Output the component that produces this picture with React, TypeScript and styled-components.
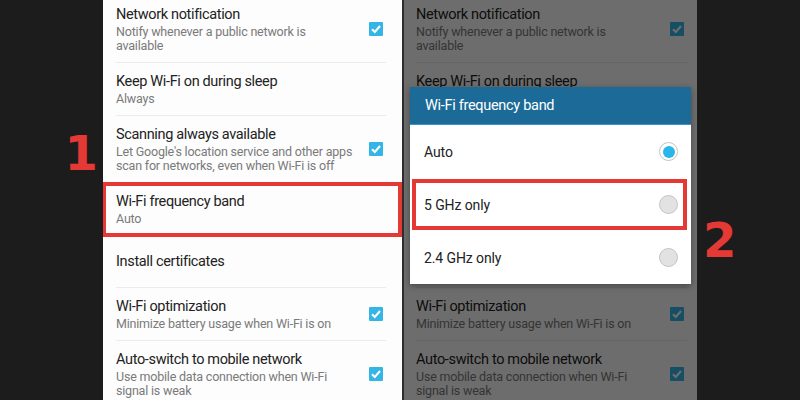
import styled, { createGlobalStyle } from "styled-components";

const GlobalStyle = createGlobalStyle`
  html, body {
    margin: 0;
    padding: 0;
    background: #1c1c1d;
  }
  body {
    font-family: Roboto, "Noto Sans", Arial, sans-serif;
  }
`;

const Page = styled.div`
  display: flex;
  width: 800px;
  height: 400px;
  overflow: hidden;
  background: #1c1c1d;
`;

const Gutter = styled.div<{ $side: "left" | "right"; $top: number }>`
  width: 103px;
  flex-shrink: 0;
  display: flex;
  align-items: flex-start;
  justify-content: ${(p) => (p.$side === "left" ? "flex-end" : "flex-start")};
  padding-top: ${(p) => p.$top}px;
  padding-right: ${(p) => (p.$side === "left" ? "5px" : "0")};
  padding-left: ${(p) => (p.$side === "right" ? "6px" : "0")};
  box-sizing: border-box;
`;

const StepNumber = styled.div`
  font-family: "DejaVu Sans", Verdana, sans-serif;
  font-weight: 700;
  font-size: 48px;
  line-height: 1;
  color: #e53935;
`;

const Screen = styled.div<{ $width: number }>`
  position: relative;
  width: ${(p) => p.$width}px;
  flex-shrink: 0;
  height: 400px;
  overflow: hidden;
  background: #fdfdfd;
`;

const Separator = styled.div`
  width: 2px;
  flex-shrink: 0;
  background: #2e2e2e;
`;

const List = styled.div`
  margin-top: -4px;
`;

const Row = styled.div<{ $highlight?: boolean }>`
  position: relative;

  ${(p) =>
    p.$highlight &&
    `
    &::after {
      content: "";
      position: absolute;
      top: -1px;
      bottom: -1px;
      left: -1px;
      right: 0;
      border: 4px solid #e53935;
      z-index: 2;
    }
  `}
`;

const RowInner = styled.div<{ $left: number; $right: number; $plain?: boolean }>`
  display: flex;
  align-items: center;
  margin-left: ${(p) => p.$left}px;
  margin-right: ${(p) => p.$right}px;
  padding: ${(p) => (p.$plain ? "16px 0 15px" : "9px 0 9px")};
  border-bottom: 1px solid #ebebeb;
`;

const RowText = styled.div`
  flex: 1;
  min-width: 0;
`;

const Title = styled.div`
  font-size: 14.5px;
  letter-spacing: -0.35px;
  line-height: 20px;
  color: #222222;
  white-space: nowrap;
`;

const Summary = styled.div`
  font-size: 12.5px;
  letter-spacing: -0.2px;
  line-height: 14px;
  color: #7a7a7a;
  white-space: nowrap;
`;

const CheckBox = styled.div`
  width: 14px;
  height: 14px;
  margin-right: 3px;
  border-radius: 1px;
  background: #33b5e5;
  display: flex;
  align-items: center;
  justify-content: center;
  flex-shrink: 0;
`;

const Dim = styled.div`
  position: absolute;
  inset: 0;
  background: rgba(0, 0, 0, 0.57);
  z-index: 3;
`;

const Dialog = styled.div`
  position: absolute;
  top: 87px;
  left: 6px;
  right: 6px;
  z-index: 4;
  background: #ffffff;
  box-shadow: 0 2px 6px rgba(0, 0, 0, 0.35);
`;

const DialogHeader = styled.div`
  height: 38px;
  box-sizing: border-box;
  display: flex;
  align-items: center;
  padding-left: 15px;
  background: #1b6a97;
  border-bottom: 1px solid #3f92c6;
  color: #ffffff;
  font-size: 14.5px;
  letter-spacing: -0.3px;
`;

const Option = styled.div<{ $highlight?: boolean }>`
  position: relative;
  height: 53px;
  display: flex;
  align-items: center;
  justify-content: space-between;
  padding: 0 13px 0 14px;
  font-size: 14px;
  letter-spacing: -0.1px;
  color: #222222;

  ${(p) =>
    p.$highlight &&
    `
    &::after {
      content: "";
      position: absolute;
      top: 1px;
      bottom: 1px;
      left: 2px;
      right: 4px;
      border: 4px solid #e53935;
    }
  `}
`;

const Radio = styled.div<{ $checked?: boolean }>`
  width: 19px;
  height: 19px;
  box-sizing: border-box;
  border-radius: 50%;
  border: 1.5px solid #c4c4c4;
  background: ${(p) => (p.$checked ? "#ffffff" : "#e2e2e2")};
  display: flex;
  align-items: center;
  justify-content: center;

  &::before {
    content: "";
    display: ${(p) => (p.$checked ? "block" : "none")};
    width: 12px;
    height: 12px;
    border-radius: 50%;
    background: #29b6e8;
  }
`;

type Setting = {
  title: string;
  summary?: string[];
  checked?: boolean;
  highlight?: boolean;
};

const settings: Setting[] = [
  {
    title: "Network notification",
    summary: ["Notify whenever a public network is", "available"],
    checked: true,
  },
  { title: "Keep Wi-Fi on during sleep", summary: ["Always"] },
  {
    title: "Scanning always available",
    summary: ["Let Google's location service and other apps", "scan for networks, even when Wi-Fi is off"],
    checked: true,
  },
  { title: "Wi-Fi frequency band", summary: ["Auto"], highlight: true },
  { title: "Install certificates" },
  {
    title: "Wi-Fi optimization",
    summary: ["Minimize battery usage when Wi-Fi is on"],
    checked: true,
  },
  {
    title: "Auto-switch to mobile network",
    summary: ["Use mobile data connection when Wi-Fi", "signal is weak"],
    checked: true,
  },
];

const bands = [
  { label: "Auto", checked: true },
  { label: "5 GHz only", highlight: true },
  { label: "2.4 GHz only" },
];

function Check() {
  return (
    <svg width="12" height="12" viewBox="0 0 12 12">
      <polyline points="2,6.2 4.8,9 10,3" fill="none" stroke="#ffffff" strokeWidth="2" />
    </svg>
  );
}

function SettingsList({ left, right, markRow }: { left: number; right: number; markRow: boolean }) {
  return (
    <List>
      {settings.map((s) => (
        <Row key={s.title} $highlight={markRow && s.highlight}>
          <RowInner $left={left} $right={right} $plain={!s.summary}>
            <RowText>
              <Title>{s.title}</Title>
              {s.summary?.map((line) => (
                <Summary key={line}>{line}</Summary>
              ))}
            </RowText>
            {s.checked && (
              <CheckBox>
                <Check />
              </CheckBox>
            )}
          </RowInner>
        </Row>
      ))}
    </List>
  );
}

export default function App() {
  return (
    <>
      <GlobalStyle />
      <Page>
        <Gutter $side="left" $top={129}>
          <StepNumber>1</StepNumber>
        </Gutter>

        <Screen $width={299}>
          <SettingsList left={13} right={16} markRow />
        </Screen>

        <Separator />

        <Screen $width={293}>
          <SettingsList left={12} right={10} markRow={false} />
          <Dim />
          <Dialog>
            <DialogHeader>Wi-Fi frequency band</DialogHeader>
            {bands.map((b) => (
              <Option key={b.label} $highlight={b.highlight}>
                {b.label}
                <Radio $checked={b.checked} />
              </Option>
            ))}
          </Dialog>
        </Screen>

        <Gutter $side="right" $top={216}>
          <StepNumber>2</StepNumber>
        </Gutter>
      </Page>
    </>
  );
}
